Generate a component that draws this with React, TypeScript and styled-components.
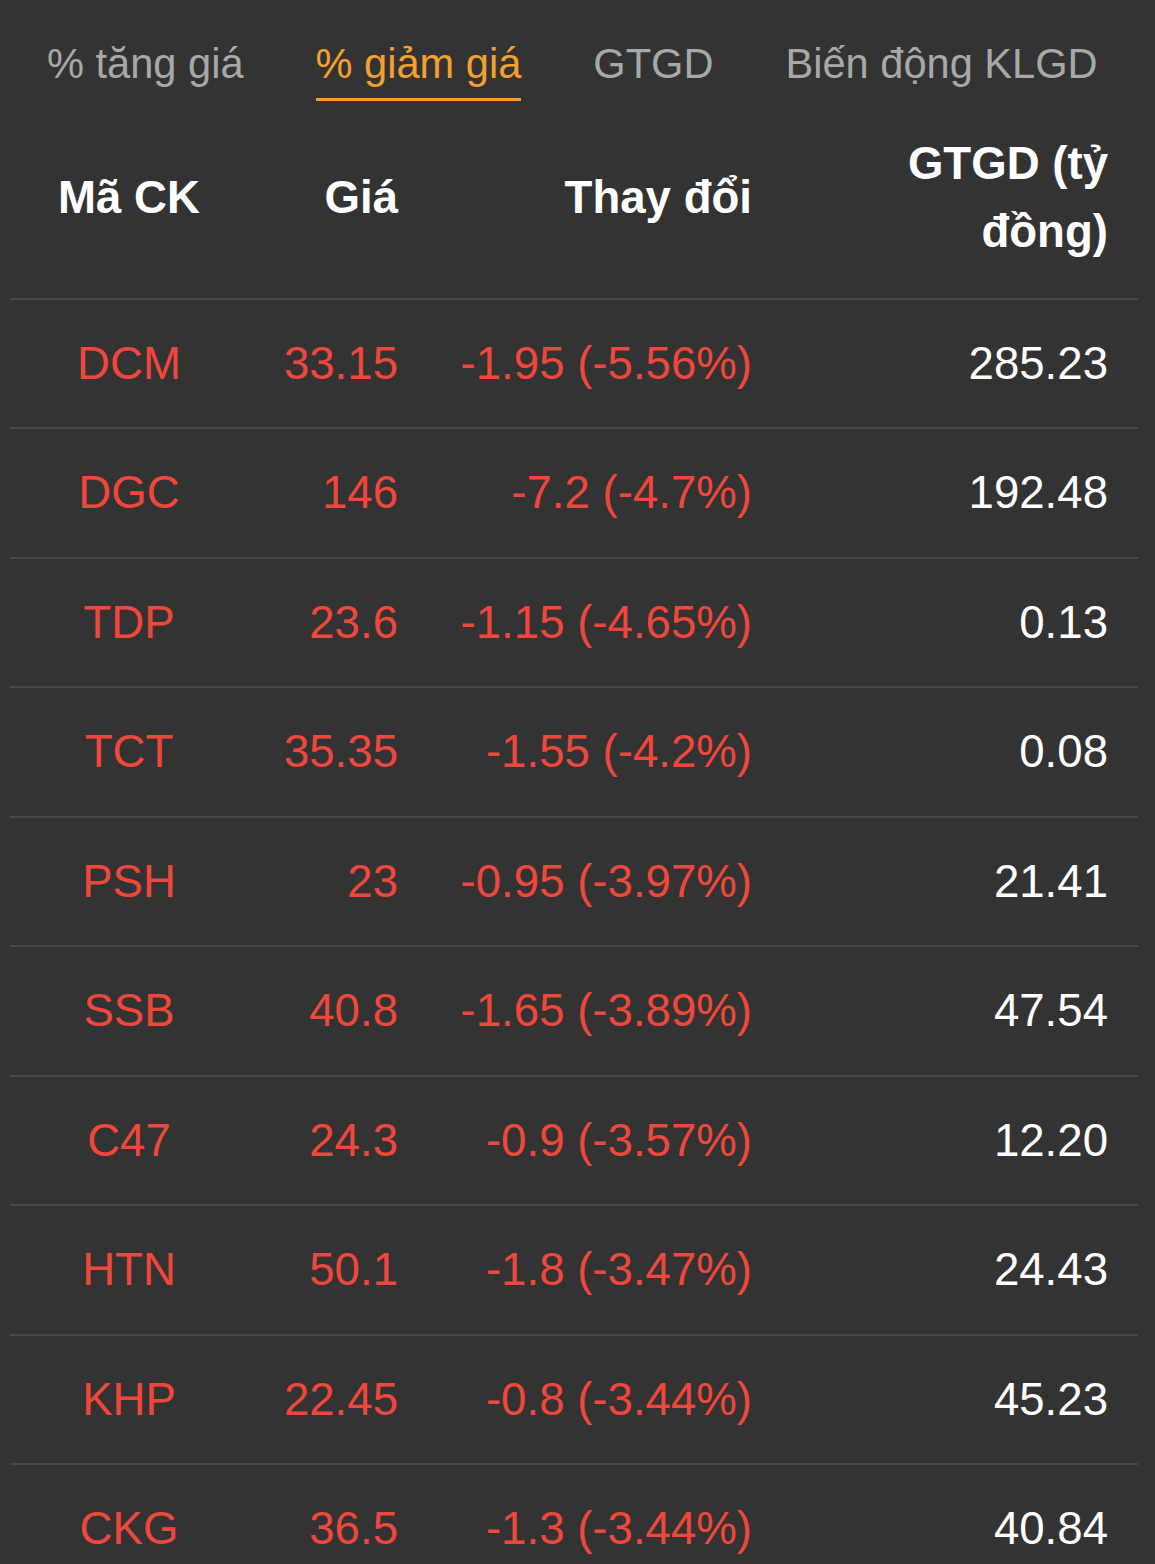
import { createGlobalStyle } from "styled-components";
import styled from "styled-components";

const GlobalStyle = createGlobalStyle`
    html, body {
        margin: 0;
        padding: 0;
        background-color: #333333;
    }
    body {
        font-family: "Liberation Sans", Arial, Helvetica, sans-serif;
        -webkit-font-smoothing: antialiased;
    }
`;

type Stock = {
    code: string;
    price: string;
    change: string;
    value: string;
};

const tabs = ["% tăng giá", "% giảm giá", "GTGD", "Biến động KLGD"];

const stocks: Stock[] = [
    { code: "DCM", price: "33.15", change: "-1.95 (-5.56%)", value: "285.23" },
    { code: "DGC", price: "146", change: "-7.2 (-4.7%)", value: "192.48" },
    { code: "TDP", price: "23.6", change: "-1.15 (-4.65%)", value: "0.13" },
    { code: "TCT", price: "35.35", change: "-1.55 (-4.2%)", value: "0.08" },
    { code: "PSH", price: "23", change: "-0.95 (-3.97%)", value: "21.41" },
    { code: "SSB", price: "40.8", change: "-1.65 (-3.89%)", value: "47.54" },
    { code: "C47", price: "24.3", change: "-0.9 (-3.57%)", value: "12.20" },
    { code: "HTN", price: "50.1", change: "-1.8 (-3.47%)", value: "24.43" },
    { code: "KHP", price: "22.45", change: "-0.8 (-3.44%)", value: "45.23" },
    { code: "CKG", price: "36.5", change: "-1.3 (-3.44%)", value: "40.84" },
];

const Page = styled.div`
    padding: 0 17px 0 10px;
    background-color: #333333;
    min-height: 1564px;
    box-sizing: border-box;
`;

const TabBar = styled.div`
    display: flex;
    gap: 72px;
    padding-left: 37px;
`;

const Tab = styled.div<{ active: boolean }>`
    padding-top: 39.6px;
    padding-bottom: 10.4px;
    font-size: 41.6px;
    line-height: 48px;
    white-space: nowrap;
    color: ${props => props.active ? '#f4a030' : '#a8a8a8'};
    border-bottom: 3px solid ${props => props.active ? '#f4a030' : 'transparent'};
`;

const Table = styled.table`
    width: 1128px;
    border-collapse: collapse;
    table-layout: fixed;
`;

const HeadCell = styled.th<{ align: string; width: number }>`
    width: ${props => props.width}px;
    padding: 29px 30px 32px 30px;
    font-size: 45.6px;
    line-height: 68px;
    font-weight: bold;
    color: #ffffff;
    text-align: ${props => props.align};
    vertical-align: middle;
    box-sizing: border-box;
`;

const Row = styled.tr`
    border-top: 2px solid #484848;
`;

const Cell = styled.td<{ align: string; light?: boolean }>`
    padding: 30px;
    font-size: 45.6px;
    line-height: 67.5px;
    color: ${props => props.light ? '#ffffff' : '#ef473b'};
    text-align: ${props => props.align};
    white-space: nowrap;
`;

export default function App(): JSX.Element {

    return(
        <>
            <GlobalStyle />
            <Page>
                <TabBar>
                    {tabs.map((tab, i) => (
                        <Tab key={tab} active={i === 1}>{tab}</Tab>
                    ))}
                </TabBar>
                <Table>
                    <thead>
                        <tr>
                            <HeadCell align="center" width={238}>Mã CK</HeadCell>
                            <HeadCell align="right" width={180}>Giá</HeadCell>
                            <HeadCell align="right" width={354}>Thay đổi</HeadCell>
                            <HeadCell align="right" width={356}>GTGD (tỷ đồng)</HeadCell>
                        </tr>
                    </thead>
                    <tbody>
                        {stocks.map((s: Stock) => (
                            <Row key={s.code}>
                                <Cell align="center">{s.code}</Cell>
                                <Cell align="right">{s.price}</Cell>
                                <Cell align="right">{s.change}</Cell>
                                <Cell align="right" light>{s.value}</Cell>
                            </Row>
                        ))}
                    </tbody>
                </Table>
            </Page>
        </>
    )
}
